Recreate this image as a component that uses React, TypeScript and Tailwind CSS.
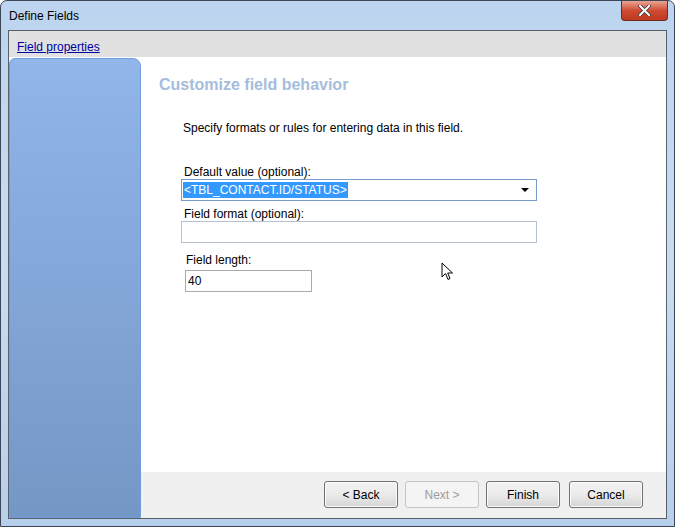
import React from 'react';

const font = { fontFamily: '"Liberation Sans", Arial, sans-serif' };

function WinButton({ label, disabled, className = '' }: { label: string; disabled?: boolean; className?: string }) {
  return (
    <button
      className={
        (disabled
          ? 'w-[74px] h-[27px] rounded-[3px] border border-[#c5c5c5] bg-[#f4f4f4] text-[12px] text-[#9c9c9c] '
          : 'w-[74px] h-[27px] rounded-[3px] border border-[#707070] bg-gradient-to-b from-[#f2f2f2] via-[#ebebeb] to-[#d5d5d5] text-[12px] text-black shadow-[inset_0_0_0_1px_#fbfbfb] ') +
        className
      }
    >
      {label}
    </button>
  );
}

export default function App() {
  return (
    <div
      className="relative w-[675px] h-[527px] overflow-hidden rounded-t-[7px] border border-[#3c4656] bg-gradient-to-b from-[#bcd4ef] via-[#c9dcf1] to-[#b6cfea] flex flex-col px-[7px] pb-[7px]"
      style={font}
    >
      {/* title bar */}
      <div className="h-[29px] flex items-center pl-[1px] text-[12px] text-black">Define Fields</div>
      <div className="absolute top-0 right-[6px] w-[47px] h-[20px] rounded-b-[4px] border border-[#6b2a22] border-t-0 bg-gradient-to-b from-[#e8a393] via-[#cf4a32] to-[#c0391f] flex items-center justify-center">
        <svg width="13" height="11" viewBox="0 0 13 11">
          <path d="M2 1 L11 10 M11 1 L2 10" stroke="#3a3a3a" strokeWidth="3.6" strokeLinecap="square" />
          <path d="M2 1 L11 10 M11 1 L2 10" stroke="#ffffff" strokeWidth="2" strokeLinecap="square" />
        </svg>
      </div>

      {/* client */}
      <div className="flex-1 flex flex-col border border-[#5a6068] bg-white">
        <div className="h-[27px] bg-[#e1e1e1] border-b border-white flex items-end pb-[1px] pl-[8px] text-[12px]">
          <span className="text-[#0000a0] underline">Field properties</span>
        </div>

        <div className="flex-1 flex">
          <div className="w-[132px] rounded-tr-[8px] rounded-tl-[6px] border border-[#6f9ddf] bg-gradient-to-b from-[#92b5ea] to-[#7597c6]" />

          <div className="flex-1 flex flex-col">
            <div className="flex-1 relative bg-white">
              <div className="pl-[18px] pt-[15px] text-[16px] font-bold text-[#a5bddd]">Customize field behavior</div>
              <div className="pl-[42px] pt-[22px] text-[12px] text-black">
                Specify formats or rules for entering data in this field.
              </div>

              <div className="pl-[40px] pt-[28px] flex flex-col text-[12px] text-black">
                <div className="pl-[3px] leading-[14px]">Default value (optional):</div>
                <div className="w-[356px] h-[22px] border border-[#7a9ccc] bg-white flex items-center justify-between px-[1px]">
                  <span className="bg-[#3399ff] text-white leading-[16px] px-[1px]">&lt;TBL_CONTACT.ID/STATUS&gt;</span>
                  <svg width="8" height="4" viewBox="0 0 8 4" className="mr-[6px]">
                    <path d="M0 0 H8 L4 4 Z" fill="#000" />
                  </svg>
                </div>

                <div className="pl-[3px] pt-[6px] leading-[14px]">Field format (optional):</div>
                <div className="w-[356px] h-[22px] border border-[#b6c2d2] bg-white" />

                <div className="pl-[5px] pt-[10px] leading-[14px]">Field length:</div>
                <div className="ml-[4px] mt-[3px] w-[127px] h-[22px] border border-[#a9a9a9] bg-white flex items-center pl-[2px]">
                  40
                </div>
              </div>

              {/* mouse cursor */}
              <svg className="absolute left-[300px] top-[204px]" width="13" height="20" viewBox="0 0 13 20">
                <path
                  d="M1 1 L1 15 L4.5 11.5 L7 17.5 L9 16.5 L6.7 11 L11.5 11 Z"
                  fill="#ffffff"
                  stroke="#000000"
                  strokeWidth="1"
                  strokeLinejoin="miter"
                />
              </svg>
            </div>

            <div className="h-[46px] bg-[#f0f0f0] flex items-start justify-end pt-[9px] pr-[23px]">
              <WinButton label="< Back" />
              <WinButton label="Next >" disabled className="ml-[7px]" />
              <WinButton label="Finish" className="ml-[7px]" />
              <WinButton label="Cancel" className="ml-[9px]" />
            </div>
          </div>
        </div>
      </div>
    </div>
  );
}
